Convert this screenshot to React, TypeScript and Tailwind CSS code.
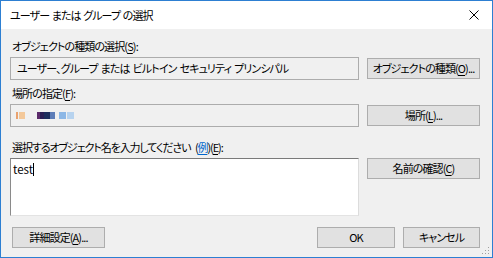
import React from 'react';

const font = "font-['Meiryo_UI','Noto_Sans_CJK_JP',sans-serif] [font-feature-settings:'palt'] tracking-[-0.9px]";

const Key = ({ k }: { k: string }) => (
  <>
    (<span className="underline underline-offset-2">{k}</span>)
  </>
);

const Btn = ({ children, className = '' }: { children: React.ReactNode; className?: string }) => (
  <button
    className={`flex h-[21px] items-center justify-center whitespace-nowrap border border-[#adadad] bg-[#e1e1e1] text-[11px] leading-none text-black ${className}`}
  >
    {children}
  </button>
);

const Blur = () => (
  <div className="flex h-[7px] items-stretch">
    <span className="w-[2px] bg-[#e9a26f]" />
    <span className="ml-[1px] w-[6px] bg-[#f3c89a]" />
    <span className="ml-[12px] w-[3px] bg-[#5a2a6a]" />
    <span className="w-[4px] bg-[#2a1f55]" />
    <span className="w-[6px] bg-[#1b2d5c]" />
    <span className="w-[5px] bg-[#5d7db8]" />
    <span className="ml-[4px] w-[7px] bg-[#8cb7e6]" />
    <span className="ml-[1px] w-[7px] bg-[#b7d3ef]" />
  </div>
);

const App = () => {
  return (
    <div className={`flex h-[258px] w-[493px] flex-col border border-[#2d7fd2] text-black ${font}`}>
      <div className="flex h-[28px] items-center justify-between bg-white pl-[9px] pr-[9px]">
        <span className="text-[11px] [word-spacing:1px]">ユーザー または グループ の選択</span>
        <svg width="10" height="10" viewBox="0 0 10 10" className="mr-[4px]">
          <path d="M0.5 0.5L9.5 9.5M9.5 0.5L0.5 9.5" stroke="#000" strokeWidth="1" />
        </svg>
      </div>

      <div className="relative flex flex-1 flex-col bg-[#f0f0f0] pl-[9px] pt-[9px] text-[11px]">
        {/* object type */}
        <div className="leading-[16px] pl-[2px]">
          オブジェクトの種類の選択<Key k="S" />:
        </div>
        <div className="mt-[3px] flex gap-[8px]">
          <div className="flex h-[23px] w-[349px] items-center whitespace-nowrap border border-[#acacac] pl-[6px] [word-spacing:1.5px]">
            ユーザー、グループ または ビルトイン セキュリティ プリンシパル
          </div>
          <Btn className="mt-[1px] w-[113px]">
            オブジェクトの種類<Key k="O" />...
          </Btn>
        </div>

        {/* location */}
        <div className="mt-[5px] leading-[16px] pl-[2px]">
          場所の指定<Key k="F" />:
        </div>
        <div className="mt-[3px] flex gap-[8px]">
          <div className="flex h-[23px] w-[349px] items-center border border-[#acacac] pl-[5px]">
            <Blur />
          </div>
          <Btn className="mt-[1px] w-[113px]">
            場所<Key k="L" />...
          </Btn>
        </div>

        {/* names */}
        <div className="mt-[12px] whitespace-pre leading-[16px] pl-[2px] tracking-[-1.1px] [word-spacing:3px]">
          選択するオブジェクト名を入力してください{' '}(<span className="text-[#0066cc] underline underline-offset-2">例</span>)<Key k="E" />:
        </div>
        <div className="mt-[3px] flex gap-[8px]">
          <div className="h-[58px] w-[349px] border-t border-l border-r border-b border-t-[#7a7a7a] border-l-[#8a8a8a] border-r-[#dcdcdc] border-b-[#e3e3e3] bg-white pl-[2px] pt-[2px] text-[11.5px] leading-[15px] tracking-normal">
            test<span className="inline-block h-[13px] w-[1px] translate-y-[2px] bg-black" />
          </div>
          <Btn className="w-[113px]">
            名前の確認<Key k="C" />
          </Btn>
        </div>

        {/* bottom buttons */}
        <div className="mt-[11px] flex items-center pr-[12px]">
          <Btn className="ml-[2px] w-[93px]">
            詳細設定<Key k="A" />...
          </Btn>
          <div className="flex-1" />
          <Btn className="w-[78px]">OK</Btn>
          <Btn className="ml-[8px] w-[77px]">キャンセル</Btn>
        </div>

        {/* resize grip */}
        <svg width="8" height="8" viewBox="0 0 8 8" className="absolute bottom-[2px] right-[2px]">
          <rect x="6" y="0" width="1" height="1" fill="#a0a0a0" />
          <rect x="6" y="3" width="1" height="1" fill="#a0a0a0" />
          <rect x="3" y="3" width="1" height="1" fill="#a0a0a0" />
          <rect x="6" y="6" width="1" height="1" fill="#a0a0a0" />
          <rect x="3" y="6" width="1" height="1" fill="#a0a0a0" />
          <rect x="0" y="6" width="1" height="1" fill="#a0a0a0" />
        </svg>
      </div>
    </div>
  );
};

export default App;
